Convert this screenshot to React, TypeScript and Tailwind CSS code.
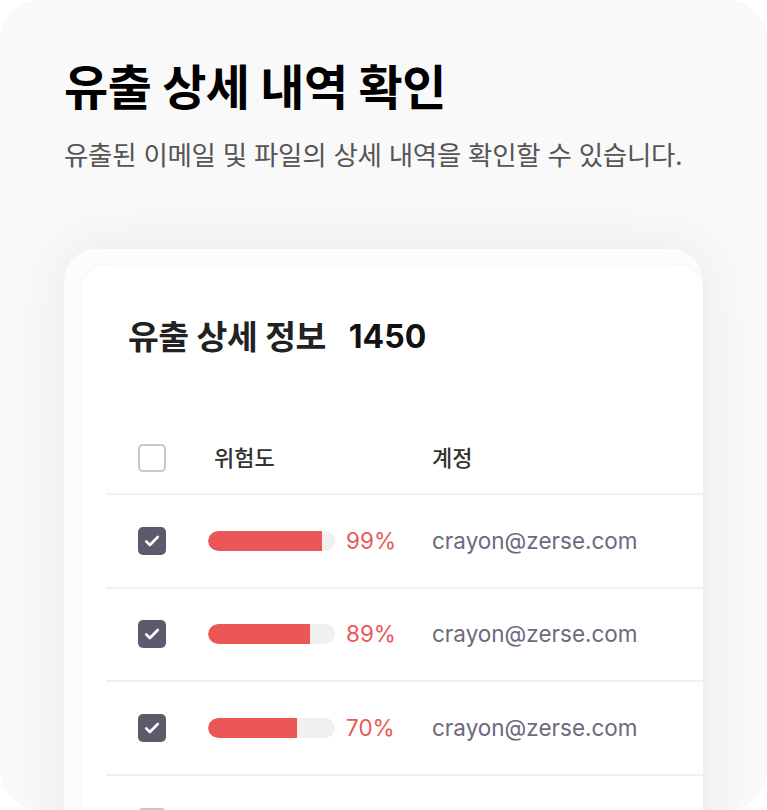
import React from 'react';

const rows = [
  { pct: '99%', fill: 114, email: 'crayon@zerse.com', checked: true },
  { pct: '89%', fill: 102, email: 'crayon@zerse.com', checked: true },
  { pct: '70%', fill: 89, email: 'crayon@zerse.com', checked: true },
];

const Checkbox: React.FC<{ checked?: boolean }> = ({ checked }) => {
  if (!checked) {
    return <div className="w-[28px] h-[28px] rounded-[5px] border-2 border-[#c6c6cd] bg-white shrink-0" />;
  }
  return (
    <div className="w-[28px] h-[28px] rounded-[5px] bg-[#5d5a6d] flex items-center justify-center shrink-0">
      <svg width="18" height="18" viewBox="0 0 18 18" fill="none">
        <path d="M3.2 9.4l3.7 3.6L14.8 5" stroke="white" strokeWidth="2.6" strokeLinecap="round" strokeLinejoin="round" />
      </svg>
    </div>
  );
};

export default function App() {
  return (
    <div className="w-[767px] h-[810px] bg-white" style={{ fontFamily: 'Inter, "Noto Sans CJK KR", sans-serif' }}>
      <div className="w-[767px] h-[810px] rounded-[40px] bg-[#f9f9f9] overflow-hidden flex flex-col">
        {/* heading */}
        <div className="pl-[64px] pt-[58px]">
          <h1 className="text-[48px] leading-[60px] font-bold text-black tracking-[-0.5px]">유출 상세 내역 확인</h1>
          <p className="mt-[20px] text-[26.5px] leading-[34px] text-[#555555] tracking-[-0.3px]">
            유출된 이메일 및 파일의 상세 내역을 확인할 수 있습니다.
          </p>
        </div>

        {/* stacked card */}
        <div className="mt-[77px] ml-[64px] mr-[64px] flex-1 rounded-t-[32px] bg-[#fcfcfc] shadow-[0_0_60px_rgba(0,0,0,0.07)] pt-[16px] pl-[17px]">
          <div className="h-full rounded-tl-[26px] rounded-tr-[26px] bg-white shadow-[0_0_8px_rgba(0,0,0,0.03)] pl-[25px]">
            <div className="pt-[54px] pl-[22px] flex items-center gap-[23px] leading-[36px] text-[#222222]">
              <span className="text-[33.5px] font-semibold tracking-[-0.5px]">유출 상세 정보</span>
              <span className="text-[32px] font-bold text-[#111111]">1450</span>
            </div>

            {/* header */}
            <div className="mt-[68px] h-[72px] flex items-center border-b-2 border-[#f1f1f1]">
              <div className="ml-[32px]"><Checkbox /></div>
              <div className="ml-[48px] w-[218px] text-[22px] font-medium text-[#333333]">위험도</div>
              <div className="text-[22px] font-medium text-[#333333]">계정</div>
            </div>

            {rows.map((r, i) => (
              <div key={i} className="h-[93.5px] flex items-center border-b-2 border-[#f1f1f1]">
                <div className="ml-[32px]"><Checkbox checked={r.checked} /></div>
                <div className="ml-[42px] w-[127px] h-[20px] rounded-full bg-[#f0f0f0] overflow-hidden">
                  <div className="h-full bg-[#eb5757] rounded-l-full" style={{ width: r.fill }} />
                </div>
                <div className="ml-[11px] w-[86px] text-[22.5px] text-[#eb5757]">{r.pct}</div>
                <div className="text-[22.5px] text-[#6c6a7e]">{r.email}</div>
              </div>
            ))}
            {/* next row, cut off by the page edge */}
            <div className="h-[93.5px] flex items-center">
              <div className="ml-[32px]"><Checkbox /></div>
            </div>
          </div>
        </div>
      </div>
    </div>
  );
}
